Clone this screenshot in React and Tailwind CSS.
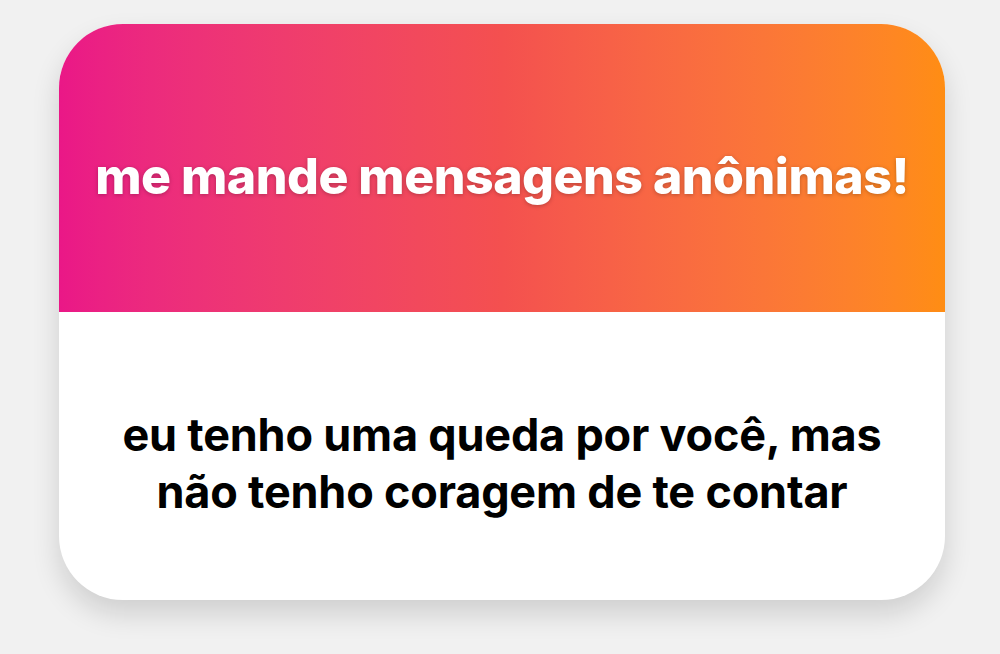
export default function App() {
  return (
    <div className="w-[1000px] h-[654px] bg-[#f1f1f1] pt-6 pl-[59px]" style={{ fontFamily: 'Inter, "Liberation Sans", sans-serif' }}>
      <div className="w-[886px] h-[576px] rounded-[64px] overflow-hidden bg-white shadow-[0_14px_28px_rgba(0,0,0,0.14)] flex flex-col">
        <div className="h-[288px] bg-gradient-to-r from-[#ea1787] via-[#f4504f] to-[#ff8d13] flex items-center justify-center pt-[16px]">
          <h1 className="text-white text-[50px] font-extrabold tracking-[-0.5px] [text-shadow:0_1px_4px_rgba(0,0,0,0.25)]">
            me mande mensagens anônimas!
          </h1>
        </div>
        <div className="flex-1 flex items-center justify-center pt-[14px]">
          <p className="text-black text-[45px] font-bold leading-[57px] text-center tracking-[-0.2px]">
            eu tenho uma queda por você, mas
            <br />
            não tenho coragem de te contar
          </p>
        </div>
      </div>
    </div>
  );
}
